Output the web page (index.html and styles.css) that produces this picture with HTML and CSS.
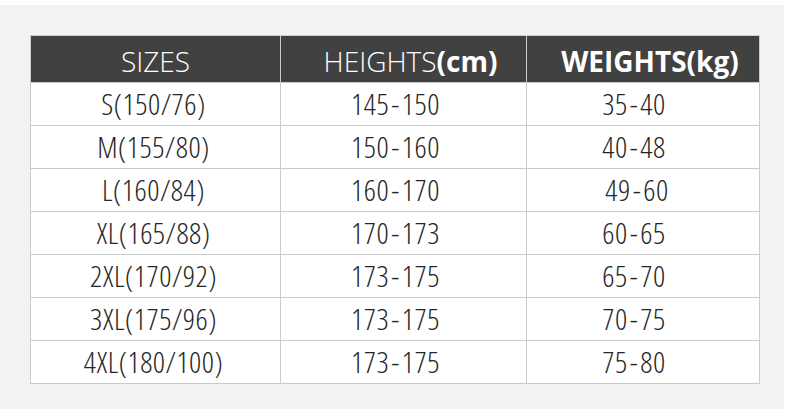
FILE: index.html
```html
<!DOCTYPE html>
<html lang="en">
<head>
<meta charset="utf-8">
<title>Size chart</title>
<link rel="stylesheet" href="styles.css">
</head>
<body>
<div class="page">
  <div class="chart">
    <div class="cell head">SIZES</div>
    <div class="cell head shift">HEIGHTS<b>(cm)</b></div>
    <div class="cell head shift"><b>WEIGHTS(kg)</b></div>

    <div class="cell size">S(150/76)</div>
    <div class="cell num">145<span class="dash">-</span>150</div>
    <div class="cell num wt">35<span class="dash">-</span>40</div>

    <div class="cell size">M(155/80)</div>
    <div class="cell num">150<span class="dash">-</span>160</div>
    <div class="cell num wt">40<span class="dash">-</span>48</div>

    <div class="cell size">L(160/84)</div>
    <div class="cell num">160<span class="dash">-</span>170</div>
    <div class="cell num wt nudge">49<span class="dash">-</span>60</div>

    <div class="cell size">XL(165/88)</div>
    <div class="cell num">170<span class="dash">-</span>173</div>
    <div class="cell num wt">60<span class="dash">-</span>65</div>

    <div class="cell size">2XL(170/92)</div>
    <div class="cell num">173<span class="dash">-</span>175</div>
    <div class="cell num wt">65<span class="dash">-</span>70</div>

    <div class="cell size">3XL(175/96)</div>
    <div class="cell num">173<span class="dash">-</span>175</div>
    <div class="cell num wt">70<span class="dash">-</span>75</div>

    <div class="cell size">4XL(180/100)</div>
    <div class="cell num">173<span class="dash">-</span>175</div>
    <div class="cell num wt">75<span class="dash">-</span>80</div>
  </div>
</div>
</body>
</html>
```
FILE: styles.css
```css
html, body {
  margin: 0;
  padding: 0;
  background: #ffffff;
}

.page {
  margin-top: 5px;
  width: 754px;
  height: 374px;
  padding: 30px 0 0 30px;
  background: #f2f2f2;
}

.chart {
  display: grid;
  grid-template-columns: 249px 245px 232px;
  grid-template-rows: 46px repeat(7, 42px);
  gap: 1px;
  padding: 1px;
  width: max-content;
  background: #cbcbcb;
  font-family: "Open Sans", "Liberation Sans", sans-serif;
}

.cell {
  display: flex;
  align-items: center;
  justify-content: center;
  background: #ffffff;
  color: #262626;
  font-size: 30px;
  font-weight: 300;
  font-stretch: 75%;
  letter-spacing: 0.5px;
  line-height: 1;
  white-space: nowrap;
}

.cell.size {
  padding-right: 4px;
}

.cell.num {
  padding-right: 16px;
}

.cell.wt {
  padding-right: 18px;
}

.cell.nudge {
  padding-right: 12px;
}

.dash {
  margin: 0 2px;
}

.cell.head {
  background: #414141;
  color: #ffffff;
  font-size: 28px;
  font-stretch: 100%;
  letter-spacing: 0;
  padding-top: 4px;
}

.cell.head.shift {
  padding-left: 14px;
}

.cell b {
  font-weight: 700;
}
```
